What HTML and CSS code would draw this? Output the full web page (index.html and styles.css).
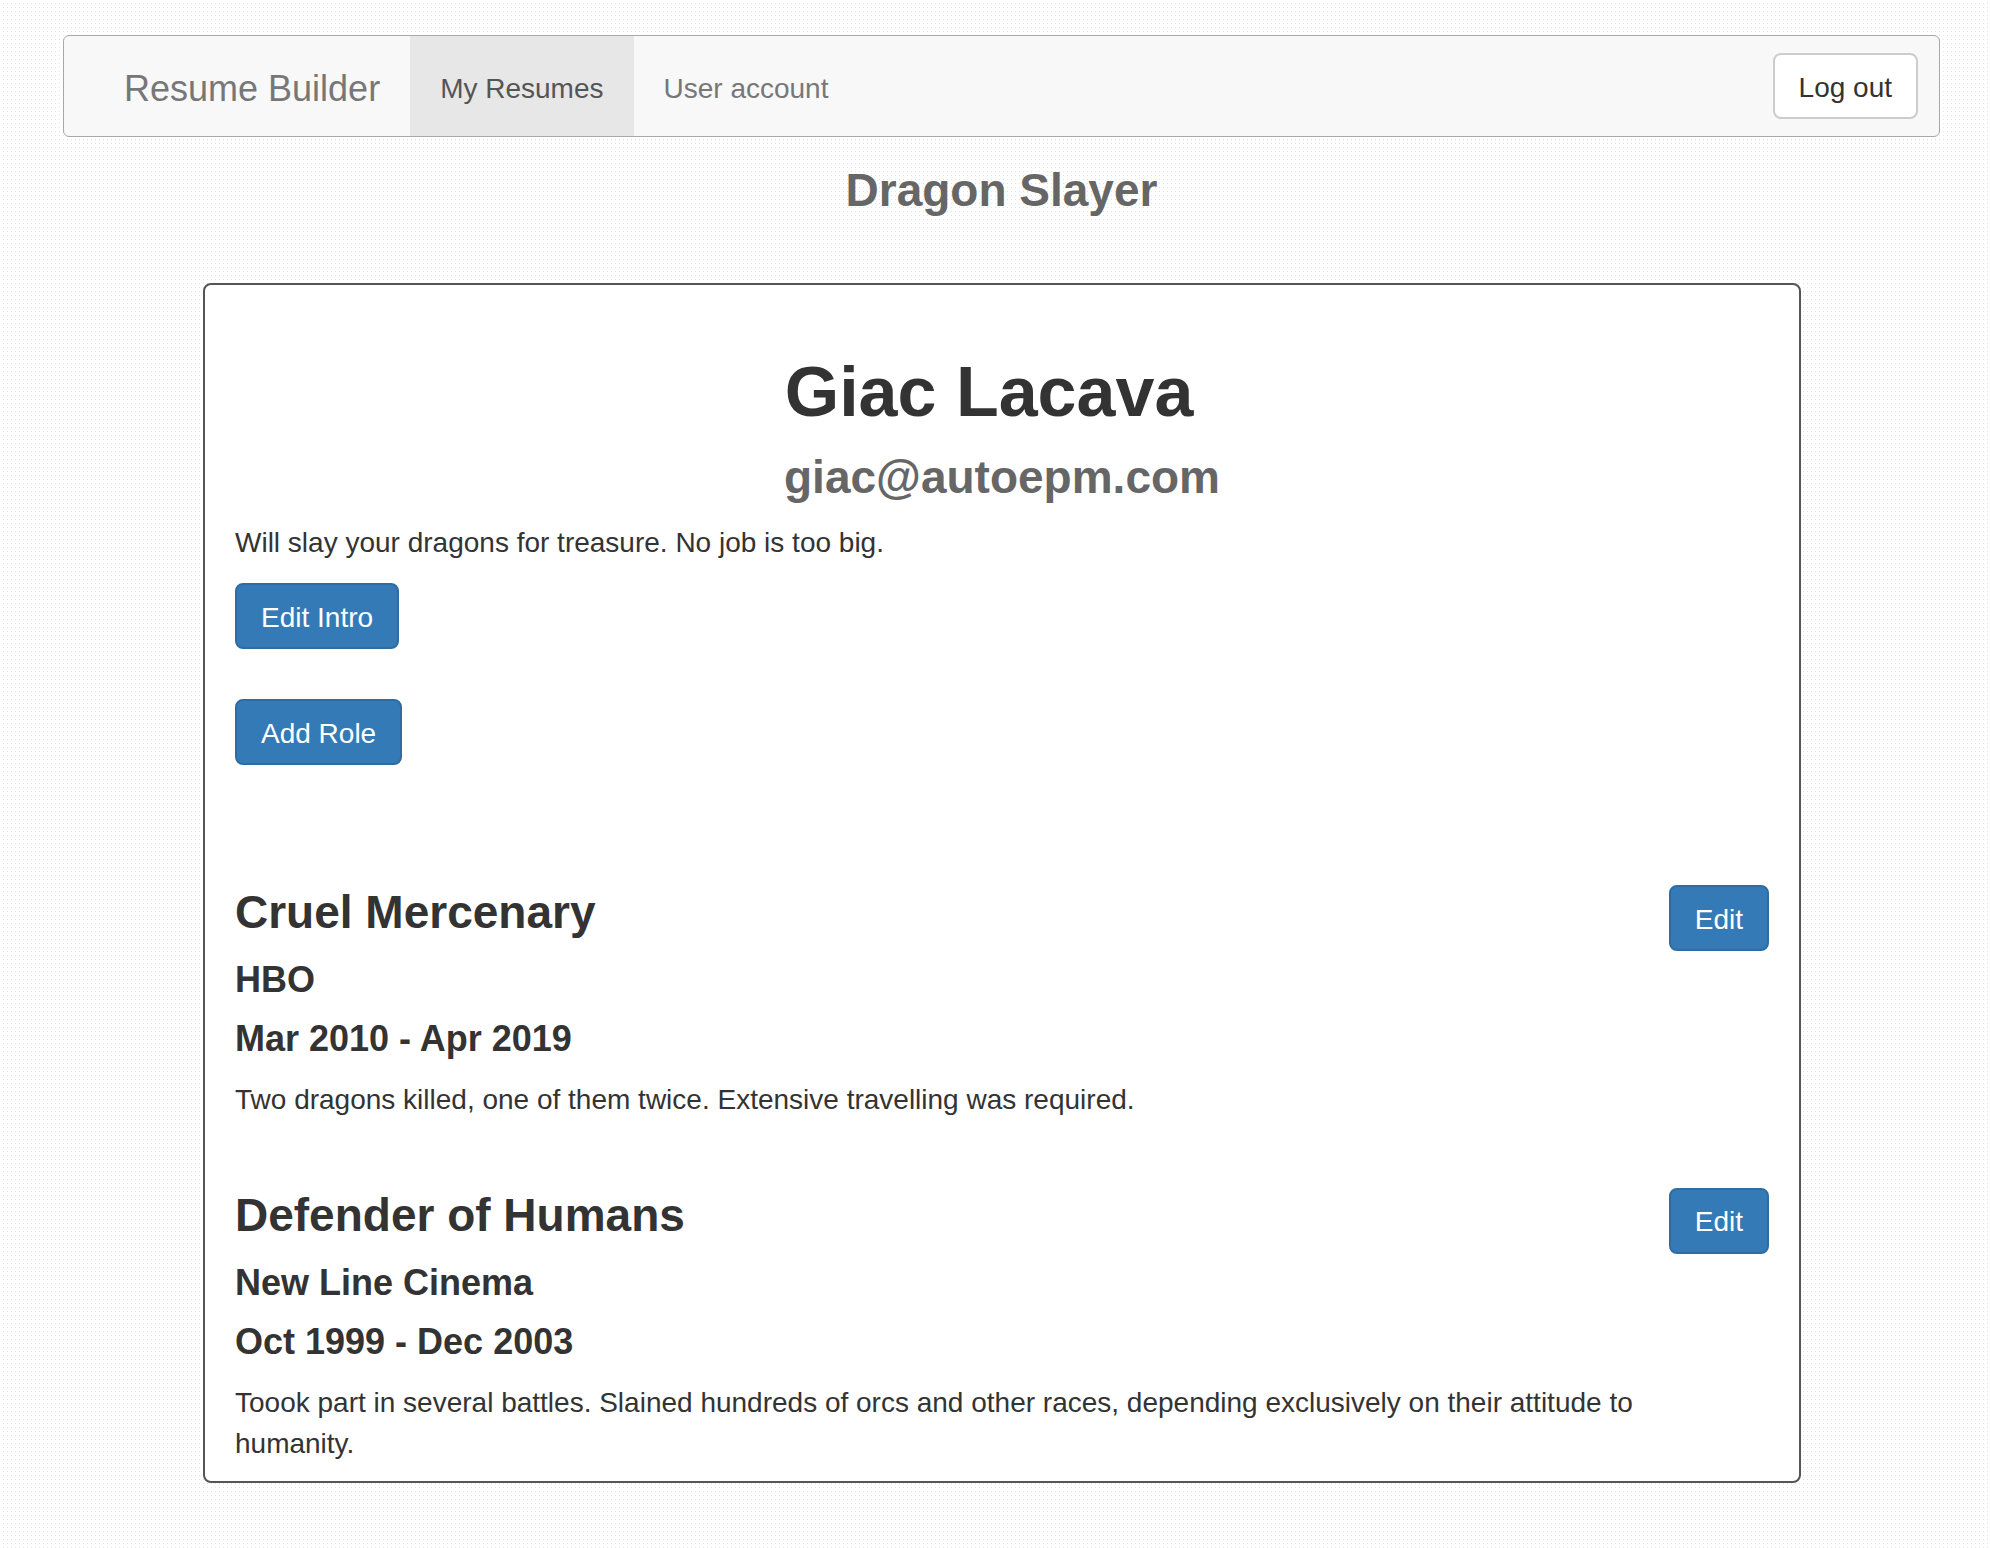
FILE: index.html
```html
<!DOCTYPE html>
<html lang="en">
<head>
<meta charset="utf-8">
<title>Resume Builder</title>
<link rel="stylesheet" href="styles.css">
</head>
<body>
<div class="container">
  <nav class="navbar">
    <a class="brand" href="#">Resume Builder</a>
    <ul class="nav">
      <li class="nav-item active"><a href="#">My Resumes</a></li>
      <li class="nav-item"><a href="#">User account</a></li>
    </ul>
    <button class="btn btn-default logout">Log out</button>
  </nav>

  <h3 class="page-title">Dragon Slayer</h3>

  <div class="resume-card">
    <h1 class="name">Giac Lacava</h1>
    <h3 class="email">giac@autoepm.com</h3>
    <p class="intro">Will slay your dragons for treasure. No job is too big.</p>
    <div class="action"><button class="btn btn-primary">Edit Intro</button></div>
    <div class="action add-role"><button class="btn btn-primary">Add Role</button></div>

    <div class="roles">
      <div class="role">
        <div class="role-body">
          <h3 class="role-title">Cruel Mercenary</h3>
          <h4 class="role-company">HBO</h4>
          <h4 class="role-dates">Mar 2010 - Apr 2019</h4>
          <p class="role-desc">Two dragons killed, one of them twice. Extensive travelling was required.</p>
        </div>
        <button class="btn btn-primary role-edit">Edit</button>
      </div>
      <div class="role">
        <div class="role-body">
          <h3 class="role-title">Defender of Humans</h3>
          <h4 class="role-company">New Line Cinema</h4>
          <h4 class="role-dates">Oct 1999 - Dec 2003</h4>
          <p class="role-desc">Toook part in several battles. Slained hundreds of orcs and other races, depending exclusively on their attitude to humanity.</p>
        </div>
        <button class="btn btn-primary role-edit">Edit</button>
      </div>
    </div>
  </div>
</div>
</body>
</html>
```

FILE: styles.css
```css
* {
  box-sizing: border-box;
}

html, body {
  margin: 0;
}

body {
  padding-top: 35px;
  padding-bottom: 60px;
  font-family: "Liberation Sans", Arial, Helvetica, sans-serif;
  font-size: 28px;
  line-height: 40px;
  color: #333;
  background-color: #ffffff;
  background-image:
    linear-gradient(90deg, #ffffff 3px, transparent 3px),
    linear-gradient(#ffffff 3px, #e3e3e3 3px);
  background-size: 4px 4px;
}

.container {
  margin-left: 63px;
  width: 1877px;
}

/* Navbar */
.navbar {
  display: flex;
  align-items: stretch;
  height: 102px;
  padding: 0 21px 0 30px;
  background: #f8f8f8;
  border: 1px solid #a8a8a8;
  border-radius: 6px;
}

.brand {
  display: flex;
  align-items: center;
  padding: 5px 30px 0;
  font-size: 36px;
  color: #777;
  text-decoration: none;
}

.nav {
  display: flex;
  margin: 0;
  padding: 0;
  list-style: none;
}

.nav-item a {
  display: flex;
  align-items: center;
  height: 100%;
  padding: 5px 30px 0;
  color: #777;
  text-decoration: none;
}

.nav-item.active a {
  background: #e7e7e7;
  color: #555;
}

.logout {
  margin-left: auto;
  align-self: center;
}

/* Buttons */
.btn {
  height: 66px;
  padding: 3px 24px 0;
  font-family: inherit;
  font-size: 28px;
  line-height: 58px;
  border-radius: 8px;
  border: 2px solid transparent;
  cursor: pointer;
}

.btn-default {
  background: #fff;
  color: #333;
  border-color: #ccc;
}

.btn-primary {
  background: #337ab7;
  color: #fff;
  border-color: #2e6da4;
}

/* Page title */
.page-title {
  margin: 28px 0 67px;
  text-align: center;
  font-size: 46px;
  line-height: 1.1;
  font-weight: bold;
  color: #666;
}

/* Card */
.resume-card {
  margin: 0 139px 0 140px;
  padding: 0 30px;
  background: #fff;
  border: 2px solid #555;
  border-radius: 8px;
}

.name {
  margin: 69px 0 21px;
  padding-right: 26px;
  text-align: center;
  font-size: 70px;
  line-height: 1.1;
  font-weight: bold;
  color: #333;
}

.email {
  margin: 0 0 21px;
  text-align: center;
  font-size: 46px;
  line-height: 1.1;
  font-weight: bold;
  color: #666;
}

.intro {
  margin: 0 0 20px;
}

.action {
  margin-bottom: 50px;
}

.action.add-role {
  margin-bottom: 0;
}

.roles {
  margin-top: 122px;
}

.role {
  display: flex;
  align-items: flex-start;
  gap: 30px;
}

.role + .role {
  margin-top: 53px;
}

.role-body {
  flex: 1;
}

.role-edit {
  margin-top: -2px;
}

.role-title {
  margin: 0 0 22px;
  font-size: 46px;
  line-height: 1.1;
  font-weight: bold;
  color: #333;
}

.role-company,
.role-dates {
  margin: 0 0 20px;
  font-size: 36px;
  line-height: 1.1;
  font-weight: bold;
  color: #333;
}

.role-desc {
  margin: 0 0 17px;
  line-height: 41px;
}
```
